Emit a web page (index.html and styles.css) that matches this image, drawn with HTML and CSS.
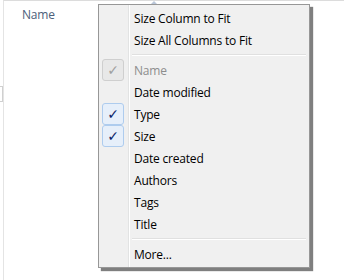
FILE: index.html
```html
<!DOCTYPE html>
<html>

<head>
    <title>Column menu</title>
    <link rel="stylesheet" href="styles.css">
</head>

<body>
    <div class="pane">
        <div class="header">
            <span class="col-name">Name</span>
            <span class="sort-mark"></span>
        </div>
        <div class="edge-mark"></div>
    </div>

    <div class="menu">
        <div class="item"><span class="label">Size Column to Fit</span></div>
        <div class="item"><span class="label">Size All Columns to Fit</span></div>
        <div class="sep"></div>
        <div class="item disabled"><span class="check">&#10003;</span><span class="label">Name</span></div>
        <div class="item"><span class="label">Date modified</span></div>
        <div class="item"><span class="check">&#10003;</span><span class="label">Type</span></div>
        <div class="item"><span class="check">&#10003;</span><span class="label">Size</span></div>
        <div class="item"><span class="label">Date created</span></div>
        <div class="item"><span class="label">Authors</span></div>
        <div class="item"><span class="label">Tags</span></div>
        <div class="item"><span class="label">Title</span></div>
        <div class="sep"></div>
        <div class="item"><span class="label">More...</span></div>
    </div>
</body>

</html>
```

FILE: styles.css
```css
body {
    margin: 0;
    background-color: #fff;
    font-family: "Open Sans", "Noto Sans", Arial, sans-serif;
    font-size: 12px;
    letter-spacing: -0.2px;
    width: 344px;
    height: 280px;
    overflow: hidden;
    position: relative;
}

.pane {
    height: 280px;
    border-top: 1px solid #dcdcdc;
    border-left: 1px solid #e4e4e4;
    margin-left: 3px;
    box-sizing: border-box;
}

.header {
    height: 26px;
    display: flex;
    align-items: center;
    padding-left: 18px;
}

.col-name {
    color: #4c607a;
    font-size: 12px;
}

.sort-mark {
    position: absolute;
    left: 151px;
    top: 1px;
    width: 0;
    height: 0;
    border-left: 3px solid transparent;
    border-right: 3px solid transparent;
    border-bottom: 3px solid #b9c6d8;
}

.edge-mark {
    position: absolute;
    left: 0;
    top: 86px;
    width: 2px;
    height: 14px;
    border: 1px solid #d0d0d0;
    border-left: none;
}

.menu {
    position: absolute;
    left: 98px;
    top: 4px;
    width: 206px;
    padding: 2px;
    background-color: #f0f0f0;
    border: 1px solid #979797;
    box-shadow: 3px 3px 1px rgba(0, 0, 0, 0.5);
    background-image: linear-gradient(to right, transparent 29px, #e2e3e3 29px, #e2e3e3 30px, #fff 30px, #fff 31px, transparent 31px);
}

.item {
    height: 22px;
    display: flex;
    align-items: center;
    position: relative;
    color: #000;
}

.label {
    padding-left: 33px;
}

.check {
    position: absolute;
    left: 1px;
    top: 0;
    width: 20px;
    height: 20px;
    border: 1px solid #aeccee;
    border-radius: 3px;
    background-color: #e6effa;
    color: #0c1f6a;
    font-family: "DejaVu Sans", sans-serif;
    font-size: 14px;
    letter-spacing: 0;
    display: flex;
    align-items: center;
    justify-content: center;
}

.disabled .label {
    color: #8d8d8d;
}

.disabled .check {
    border-color: #cfcfcf;
    background-color: #e8e8e8;
    color: #a0a0a0;
}

.sep {
    height: 8px;
    margin-left: 31px;
    margin-right: 1px;
    background-image: linear-gradient(to bottom, transparent 3px, #e0e0e0 3px, #e0e0e0 4px, #fff 4px, #fff 5px, transparent 5px);
}
```
